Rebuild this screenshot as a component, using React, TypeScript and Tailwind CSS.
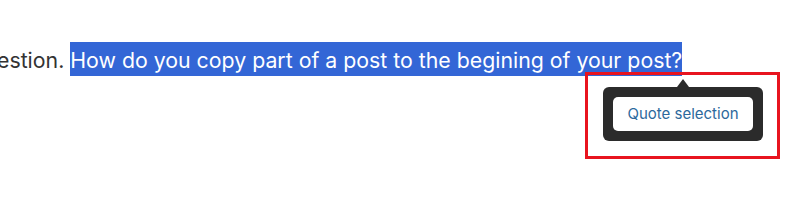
export default function App() {
  return (
    <div className="relative h-[204px] w-[800px] overflow-hidden bg-white font-['Inter','Liberation_Sans',sans-serif]">
      <p className="-ml-[3px] mt-[43px] whitespace-nowrap text-[21.3px] leading-[35px] text-[#333]">
        estion.{' '}
        <span className="bg-[#3366d6] pb-[3px] pt-[5px] text-white">
          How do you copy part of a post to the begining of your post?
        </span>
      </p>

      {/* quote popover */}
      <div className="absolute left-[603px] top-[79px] flex flex-col items-center">
        <div className="ml-[74px] h-0 w-0 self-start border-x-[6px] border-b-[8px] border-x-transparent border-b-[#2b2b2b]" />
        <div className="rounded-md bg-[#2b2b2b] p-[10px]">
          <button className="h-[34px] w-[140px] rounded-[5px] bg-white text-[15px] text-[#2c699c]">
            Quote selection
          </button>
        </div>
      </div>

      {/* annotation */}
      <div className="absolute left-[585px] top-[72px] h-[87px] w-[195px] border-[3px] border-[#e8141f]" />
    </div>
  );
}
